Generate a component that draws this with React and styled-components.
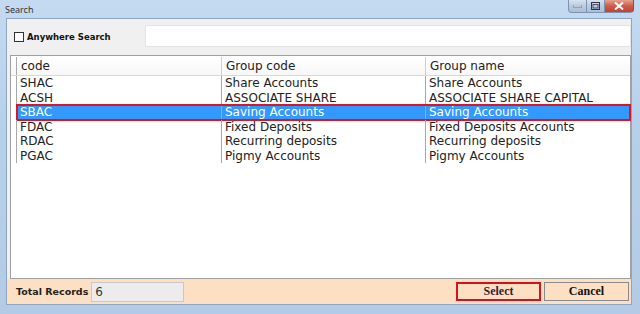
import React from 'react';
import styled, { createGlobalStyle } from 'styled-components';

const GlobalStyle = createGlobalStyle`
  html, body { margin: 0; padding: 0; background: #fff; }
  body { font-family: "DejaVu Sans", Verdana, sans-serif; }
`;

const rows = [
    { code: 'SHAC', group: 'Share Accounts', name: 'Share Accounts' },
    { code: 'ACSH', group: 'ASSOCIATE SHARE', name: 'ASSOCIATE SHARE CAPITAL' },
    { code: 'SBAC', group: 'Saving Accounts', name: 'Saving Accounts', selected: true },
    { code: 'FDAC', group: 'Fixed Deposits', name: 'Fixed Deposits Accounts' },
    { code: 'RDAC', group: 'Recurring deposits', name: 'Recurring deposits' },
    { code: 'PGAC', group: 'Pigmy Accounts', name: 'Pigmy Accounts' },
];

export default function App() {
    return (
        <>
            <GlobalStyle />
            <Window>
                <TitleBar>
                    <Title>Search</Title>
                    <Controls>
                        <CtrlButton>
                            <svg width="9" height="3" viewBox="0 0 9 3"><rect x="0" y="0" width="9" height="2" fill="#fff" stroke="#445" strokeWidth="0.6" /></svg>
                        </CtrlButton>
                        <CtrlButton>
                            <svg width="9" height="8" viewBox="0 0 9 8"><rect x="0.5" y="0.5" width="8" height="7" fill="none" stroke="#334" /><rect x="2" y="2.5" width="5" height="3.5" fill="none" stroke="#334" strokeWidth="0.8" /></svg>
                        </CtrlButton>
                        <CloseButton>
                            <svg width="10" height="8" viewBox="0 0 10 8"><path d="M1 0.5 L9 7.5 M9 0.5 L1 7.5" stroke="#fff" strokeWidth="2" /></svg>
                        </CloseButton>
                    </Controls>
                </TitleBar>
                <Body>
                    <SearchRow>
                        <CheckLabel>
                            <Check />
                            Anywhere Search
                        </CheckLabel>
                        <SearchInput />
                    </SearchRow>
                    <Grid>
                        <HeaderRow>
                            <RowHead />
                            <HeadCell $w={205}>code</HeadCell>
                            <HeadCell $w={204}>Group code</HeadCell>
                            <HeadCell $last>Group name</HeadCell>
                        </HeaderRow>
                        {rows.map(r => (
                            <Row key={r.code}>
                                <RowHead />
                                <Line $selected={r.selected}>
                                    <Cell $w={205}>{r.code}</Cell>
                                    <Cell $w={204}>{r.group}</Cell>
                                    <Cell $last>{r.name}</Cell>
                                </Line>
                            </Row>
                        ))}
                    </Grid>
                    <Footer>
                        <FooterLabel>Total Records</FooterLabel>
                        <CountBox>6</CountBox>
                        <Spacer />
                        <ActionButton $active>Select</ActionButton>
                        <ActionButton>Cancel</ActionButton>
                    </Footer>
                </Body>
            </Window>
        </>
    );
}

const Window = styled.div`
width: 640px;
height: 314px;
box-sizing: border-box;
background: linear-gradient(#c4daf1, #b7d0ea 40%, #b3cbe6);
padding: 0 8px 9px 6px;
display: flex;
flex-direction: column;
`;

const TitleBar = styled.div`
height: 18px;
display: flex;
align-items: flex-start;
justify-content: space-between;
`;

const Title = styled.div`
font-family: "Noto Sans", "DejaVu Sans", sans-serif;
font-size: 9px;
color: #333;
padding-top: 3px;
margin-left: -1px;
`;

const Controls = styled.div`
display: flex;
margin-right: -2px;
`;

const CtrlButton = styled.div`
width: 18px;
height: 13px;
display: flex;
align-items: center;
justify-content: center;
background: linear-gradient(#d7e3f1, #b9cbe1 50%, #aabfda);
border: 1px solid #7e93b0;
border-top: none;
border-right: none;
box-sizing: border-box;
&:first-child { border-bottom-left-radius: 4px; }
`;

const CloseButton = styled(CtrlButton)`
width: 30px;
background: linear-gradient(#e3a291, #cf5b4a 50%, #c2412f);
border-right: 1px solid #7e5050;
border-bottom-right-radius: 4px;
`;

const Body = styled.div`
flex: 1;
background: #f0f0f0;
border: 1px solid #8ea6c3;
display: flex;
flex-direction: column;
`;

const SearchRow = styled.div`
height: 36px;
display: flex;
align-items: center;
padding: 0 0 0 7px;
`;

const CheckLabel = styled.label`
display: flex;
align-items: center;
gap: 3px;
width: 131px;
font-family: "DejaVu Sans", Verdana, sans-serif;
font-weight: bold;
font-size: 8.5px;
color: #111;
margin-top: -1px;
`;

const Check = styled.span`
width: 8px;
height: 8px;
border: 1px solid #333;
background: #fff;
`;

const SearchInput = styled.div`
flex: 1;
height: 20px;
background: #fff;
border: 1px solid #e4e4e4;
margin-top: -3px;
`;

const Grid = styled.div`
height: 222px;
margin: 0 0 0 3px;
background: #fff;
border: 1px solid #a0a0a0;
`;

const HeaderRow = styled.div`
display: flex;
height: 18px;
border-bottom: 1px solid #d8d8d8;
background: linear-gradient(#fff, #f7f7f7);
margin-top: 1px;
`;

const Row = styled.div`
display: flex;
height: 14.5px;
`;

const RowHead = styled.div`
width: 5px;
flex-shrink: 0;
border-right: 1px solid #a8a8a8;
`;

const Line = styled.div`
flex: 1;
display: flex;
box-sizing: border-box;
background: ${p => (p.$selected ? '#3399ff' : 'transparent')};
color: ${p => (p.$selected ? '#fff' : '#222')};
outline: ${p => (p.$selected ? '2px solid #e0141e' : 'none')};
outline-offset: -1px;
`;

const HeadCell = styled.div`
width: ${p => (p.$w ? p.$w + 'px' : 'auto')};
flex: ${p => (p.$last ? 1 : 'none')};
border-right: ${p => (p.$last ? 'none' : '1px solid #d0d0d0')};
padding-left: 4px;
font-size: 12px;
color: #222;
line-height: 18px;
box-sizing: border-box;
`;

const Cell = styled.div`
width: ${p => (p.$w ? p.$w + 'px' : 'auto')};
flex: ${p => (p.$last ? 1 : 'none')};
border-right: ${p => (p.$last ? 'none' : '1px solid #a8a8a8')};
padding-left: 3px;
font-size: 12px;
line-height: 14.5px;
box-sizing: border-box;
white-space: nowrap;
`;

const Footer = styled.div`
flex: 1;
background: #fddfc3;
display: flex;
align-items: center;
padding: 0 2px 0 9px;
gap: 3px;
`;

const FooterLabel = styled.div`
font-family: "DejaVu Sans", Verdana, sans-serif;
font-weight: bold;
font-size: 9.5px;
color: #222;
`;

const CountBox = styled.div`
width: 88px;
height: 18px;
background: #ececec;
border: 1px solid #c8c8c8;
font-size: 12px;
line-height: 18px;
padding-left: 3px;
box-sizing: content-box;
color: #333;
`;

const Spacer = styled.div`
flex: 1;
`;

const ActionButton = styled.div`
width: 85px;
height: 19px;
box-sizing: border-box;
border: ${p => (p.$active ? '2px solid #d2121c' : '1px solid #8a8a8a')};
display: flex;
align-items: center;
justify-content: center;
font-family: "Liberation Serif", "Times New Roman", serif;
font-weight: bold;
font-size: 12px;
color: ${p => (p.$active ? '#3a1a30' : '#111')};
`;
